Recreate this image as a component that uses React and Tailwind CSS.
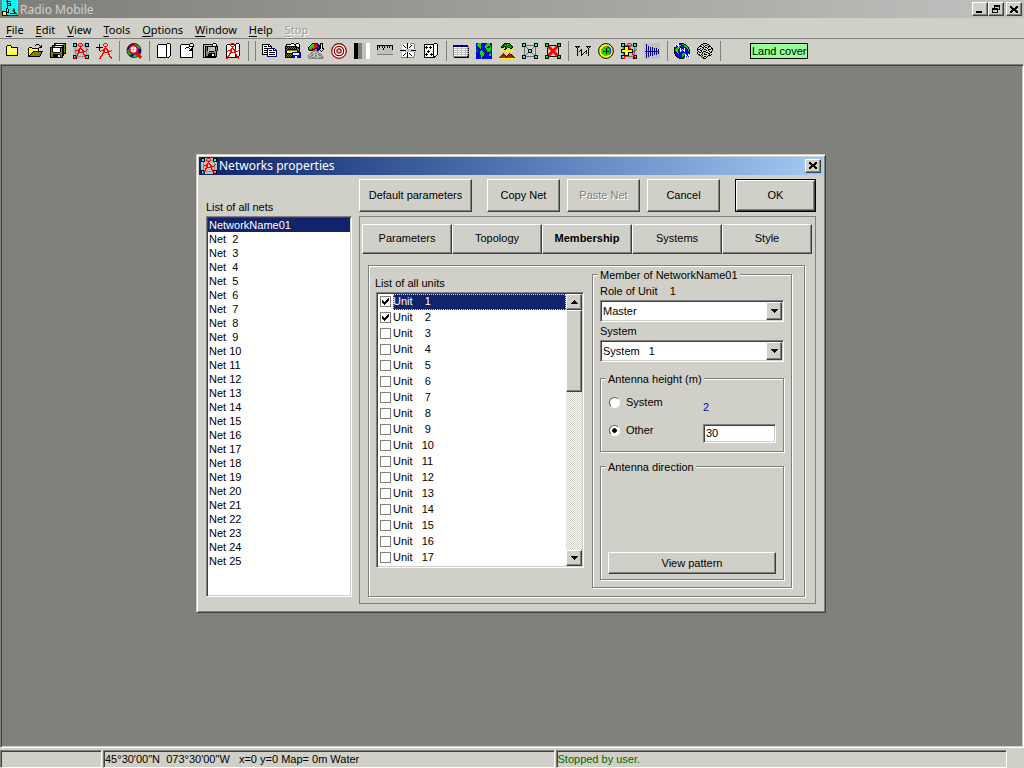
import React, { useState } from "react";

const RAISED =
  "border border-t-white border-l-white border-r-[#404040] border-b-[#404040] shadow-[inset_-1px_-1px_0_#808080] bg-[#d1d0c8]";
const SUNKEN =
  "border border-t-[#808080] border-l-[#808080] border-r-white border-b-white shadow-[inset_1px_1px_0_#404040,inset_-1px_-1px_0_#d1d0c8]";
const ETCHED = "border border-[#808080] shadow-[1px_1px_0_#fff,inset_1px_1px_0_#fff]";

const COLORS = {
  k: "#000000",
  w: "#ffffff",
  y: "#ffff00",
  Y: "#ffff9c",
  r: "#ff0000",
  R: "#800000",
  g: "#00e000",
  G: "#008000",
  b: "#0000ff",
  n: "#000080",
  c: "#00ffff",
  o: "#808000",
  s: "#808080",
  l: "#c0c0c0",
  d: "#404040",
  t: "#a04000",
};

function Pixels({ rows }) {
  const runs = [];
  rows.forEach((row, y) => {
    let x = 0;
    while (x < row.length) {
      const ch = row[x];
      let end = x + 1;
      while (end < row.length && row[end] === ch) end++;
      if (COLORS[ch]) runs.push(<rect key={`${x}-${y}`} x={x} y={y} width={end - x} height="1" fill={COLORS[ch]} />);
      x = end;
    }
  });
  return <>{runs}</>;
}

function Svg({ children }) {
  return (
    <svg width="16" height="16" viewBox="0 0 16 16" shapeRendering="crispEdges" aria-hidden="true" className="block shrink-0">
      {children}
    </svg>
  );
}

const ART = {
  newFolder: [
    "", "",
    "...kkkk.........",
    "..kYyYyk........",
    "..kyYyYkkkkkkk..",
    "..kYYyYyYyYyYk..",
    "..kYyYYYyYYYyk..",
    "..kyYyYyYyYyYk..",
    "..kYYyYYYyYYYk..",
    "..kYyYyYyYyYyk..",
    "..kyYYYyYYYyYk..",
    "..kYyYyYyYyYyk..",
    "..kkkkkkkkkkkk..",
  ],
  openFolder: [
    "",
    ".........kkk....",
    "........k...k.k.",
    ".............kk.",
    "..kkk.......kkk.",
    ".kYyYkkkkkkk....",
    ".kyYyYyYyYyk....",
    ".kYyYyYyYyYk....",
    ".kyYyYkkkkkkkkkk",
    ".kYyYkooooooook.",
    ".kyYkoooooooook.",
    ".kYkoooooooook..",
    ".kkooooooooook..",
    ".kkkkkkkkkkkk...",
  ],
  saveAll: [
    "....kkkkkkkkkkkk",
    "....kowwwwwwwook",
    "..kkkkkkkkkkkkok",
    "..kokwwwwwwwkkok",
    "kkkkkkkkkkkkkkok",
    "kokwwwwwwwkokkok",
    "kokwwwwwwwkokkok",
    "kokwwwwwwwkokkok",
    "kokwwwwwwwkokkok",
    "kookkkkkkkookkok",
    "koooooooooookkkk",
    "kookkkkkkkookk..",
    "kookkkkkwwkokk..",
    "kookkkkkwwkok...",
    "kkkkkkkkkkkkk...",
  ],
  mast: [
    "......rrr.......",
    ".....r...r......",
    ".....r...r......",
    "......rrr.......",
    ".......r........",
    "......rrr.......",
    ".....rr.rr....r.",
    "...rrrr..rr..r..",
    "..r..rr..rrrr...",
    ".....rrrrrr.....",
    "....rr....r.....",
    "....r.....rr....",
    "...rr......r....",
    "..rr.......rr...",
    "..r.........rr..",
    ".rr..........r..",
  ],
  pageOpen: [
    "...........kkk..",
    "..kkkkkkkkkwwwk.",
    ".kwwwwwwwwkwwwk.",
    ".kwwwwwwwwkwwwk.",
    ".kwwwwwwwwkwwwk.",
    ".kwwwwwwwwkwwwk.",
    ".kwwwwwwwwkwwwk.",
    ".kwwwwwwwwkwwwk.",
    ".kwwwwwwwwkwwwk.",
    ".kwwwwwwwwkwwwk.",
    ".kwwwwwwwwkwwwk.",
    ".kwwwwwwwwkwwwk.",
    ".kwwwwwwwwkwwwk.",
    ".kwwwwwwwwkwwk..",
    ".kkkkkkkkkkkk...",
  ],
  pageArrow: [
    "...........kkk..",
    "..kkkkkkkkkwwwk.",
    ".kwwwwwwwwkwwwk.",
    ".kwwwwwwwwkkkkk.",
    ".kwwwwwkkkwwwk..",
    ".kwwwwkwwwkwkk..",
    ".kwwwwwwwwwkkk..",
    ".kwwwwwwwwkkkk..",
    ".kwwwwwwwwwwwk..",
    ".kwwwwwwwwwwwk..",
    ".kwwwwwwwwwwwk..",
    ".kwwwwwwwwwwwk..",
    ".kwwwwwwwwwwwk..",
    ".kwwwwwwwwwwwk..",
    ".kkkkkkkkkkkkk..",
  ],
  pageSave: [
    "...........kkk..",
    ".kkkkkkkkkkwwwk.",
    ".kllllllllkwwwk.",
    ".klkkkkkkkkkkkkk",
    ".klksklllllllksk",
    ".klksklllllllksk",
    ".klksklllllllksk",
    ".klksklllllllksk",
    ".klksslkkkkkssk.",
    ".klkssssssssssk.",
    ".klkssskkkkkksk.",
    ".klksskkkkwwksk.",
    ".klksskkkkwwksk.",
    ".klkkkkkkkkkkkk.",
    ".kkkkkkkkkkkkk..",
  ],
  copy: [
    "",
    "kkkkkkkk........",
    "kwwwwwkwk.......",
    "kwkkkwkkkk......",
    "kwwwwwwwwk......",
    "kwkkknnnnnnnn...",
    "kwwwwnwwwwwnwn..",
    "kwkkknwkkkwnnnn.",
    "kwwwwnwwwwwwwwn.",
    "kwkkknwkkkkkkwn.",
    "kwwwwnwwwwwwwwn.",
    "kkkkknwkkkkkkwn.",
    ".....nwwwwwwwwn.",
    ".....nnnnnnnnnn.",
  ],
  paste: [
    "......kkk..kkk..",
    ".kkkkkwwwkkwwwk.",
    ".kwwwwwwwwkwwwk.",
    "kkkkkkkkkkkkwwk.",
    "kokokokokokkkkk.",
    "kkokokokokokokk.",
    "kokkkkkkkkkkook.",
    "kkooooooooookok.",
    "kkYYyYyYyYyYkkk.",
    "kkyYyYynnnnnnnnn",
    "kkkkkkknwwwwwwbn",
    "kokokoknwwwwwwbn",
    "kkokokonbbbbbbbn",
    "kokokoknbbwwbbbn",
    "kkkkkkknnnwwnnnn",
  ],
  terrain: [
    "....kkkkkk..kkk.",
    "...kggrrrbk.kyk.",
    "..kgggrrrbbkkyk.",
    ".kggggrrrbbbkyk.",
    "kgggggrrkbbbkyk.",
    "kgggrrrkkbbkkykk",
    "krrrkkksskkkyyyk",
    ".kkkksssskk.kyk.",
    ".....sslss...k..",
    "...ssllllss.....",
    "..sslllssllss...",
    ".sllssllllssls..",
    "sllssllssllsss..",
    "slsslllssllllss.",
    "ssllsssllllsslss",
    ".ssssssssssssss.",
  ],
  ruler: [
    "", "",
    "kkkkkkkkkkkkkkkk",
    "klkllklkllklkllk",
    "klkllklkllklkllk",
    "klllllkllllllllk",
    "klllllkllllllllk",
    "llllllllllllllll",
    "llllllllllllllll",
    "llllllllllllllll",
    "llllllllllllllll",
    "ssssssssssssssss",
  ],
  center: [
    ".......k...sss..",
    "..lwwwwkwwswwws.",
    ".lwkwwwkwwwkwws.",
    ".lwwkwwkwwkwwws.",
    ".lwwwkwkwkwwwws.",
    ".lwwwwwkwwwwwws.",
    ".......lll......",
    "kkkkkk.lll.kkkkk",
    ".......lll......",
    ".lwwwwwkwwwwwws.",
    ".lwwwkwkwkwwwws.",
    ".lwwkwwkwwkwwws.",
    ".lwkwwwkwwwkwws.",
    ".lwwwwwkwwwwws..",
    ".sssssskssssss..",
  ],
  random: [
    "...........kkk..",
    ".kkkkkkkkkkwwwk.",
    ".kwwwwwwwwkwwwk.",
    ".kwkwwwkwwkwwwk.",
    ".kkkkwkkkwkwwwk.",
    ".kwkwwwkwwkwwwk.",
    ".kwwwwwwwwkwwwk.",
    ".kwwwkwwwwkwwwk.",
    ".kwwkkkwwwkwwwk.",
    ".kwwwkwwwwkwwwk.",
    ".kwkwwwwkwkwwwk.",
    ".kkkkwwkkkkwwwk.",
    ".kwkwwwwkwkwwk..",
    ".kwwwwwwwwkkk...",
    ".kkkkkkkkkkk....",
  ],
  table: [
    "", "",
    "nnnnnnnnnnnnnnn.",
    "nnnnnnnnnnnnnnns",
    "swwwlwwwlwwwwwls",
    "slllllllllllllsk",
    "swwwlwwwlwwwlwls",
    "slllllllllllllsk",
    "swwwlwwwlwwwlwls",
    "slllllllllllllsk",
    "swwwlwwwlwwwlwls",
    "slllllllllllllsk",
    "swwwlwwwlwwwlwlk",
    "sssssssssssssskk",
    ".kkkkkkkkkkkkkkk",
  ],
  world: [
    "bbggggkbbbbgggbb",
    "bggggkbbbkggggbb",
    "kggggkbbkgggggbb",
    "bkgggbbbbgggkbgb",
    "bbkggkbbbggkbbgb",
    "bbbkgkbbbbgggggb",
    "bbbbkbbbbkgggggk",
    "gbbbbgbbbbkggggb",
    "kgbbgggkbbbgggbb",
    "bbbbggggkbbbkbbb",
    "bbbkgggggkbbbbgb",
    "bbbbggggkbbbbggb",
    "bbbbkgggbbbbbggb",
    "bbbbbggkbbbbbkbb",
    "bbbbbgkbbbbbbbbb",
    "bbbbbgbbbbbbbbbb",
  ],
  island: [
    ".....kkkkkk.....",
    "....kGGGgGGk....",
    "...kGGgGGGGGk...",
    "..kGGkkGGgGGGk..",
    "..kkk.kGGkkGGk..",
    "......kk...kk...",
    ".....kk.........",
    "y.yy.yyy.yyy.yy.",
    ".y..y...y...y..y",
    "................",
    "....R.....R.....",
    "...RtR...RtRR...",
    "..RtRtR.RtRtRR..",
    ".RtRttRRRttRtRR.",
    "RttttttRttttttRR",
    "yyyyyyyyyyyyyyyy",
  ],
  antennas: [
    "", "",
    "",
    "kkkkk......kkkkk",
    ".kgk........kgk.",
    "..k..........k..",
    "..k...k......k..",
    "..k..kk....k.k..",
    "..k.k.k...kk.k..",
    "..k...k..k.k.k..",
    "..k...k.k..k.k..",
    "..k...kk.....k..",
    "..k...k......k..",
  ],
  yagi: [
    "llllllllllllllll",
    "llnlllllllllllll",
    "llnlllllllllllll",
    "llnlnlllllllllll",
    "llnlnlnlnlllllll",
    "llnlnlnlnlnlnlll",
    "llnlnlnlnlnlnlnl",
    "llnlnlnlnlnlnlnl",
    "lnnnnnnnnnnnnnnl",
    "llnlnlnlnlnlnlnl",
    "llnlnlnlnlnlnlnl",
    "llnlnlnlnlnlnlll",
    "llnlnlnlnlllllll",
    "llnlnlllllllllll",
    "llnlllllllllllll",
    "llllllllllllllll",
  ],
  globe: [
    ".w..wkkkkk......",
    ".ww.wbbbggkk....",
    ".wkwwggbbbggk...",
    ".wbbwgkbbbgggk..",
    "kbbgggkbbbbkggk.",
    "kbgggkwbbbwbkgk.",
    "kgggkbwbwbwbbkgk",
    "kgggkbwwbwwbbbgk",
    "kbggbbwbbbwbbbbk",
    "kbbgkbbbbbbbbbbk",
    "kbbbgkbbbggbbbbk",
    ".kbbbbbbgggwbbw.",
    ".kbbbbbbggkwwkww",
    "..kbbbbbgkbwbwbw",
    "...kkbbbbbkw...w",
    ".....kkkkk.w...w",
  ],
  mesh: [
    "......kkkk......",
    "....kk....kk....",
    "...k..k.kk..k...",
    "..kkk..k...kkk..",
    ".k...kk.kk.k..k.",
    "k..k..k...k...kk",
    "kkk..k.kk..kkk.k",
    "k..kk....k.k...k",
    ".k..k.kkk...k.k.",
    "k.kk.k...kk..kk.",
    "k....k.k...kk...",
    ".kk.k..kkk..k.k.",
    "..kk.k.....kkk..",
    "....k..kk.k.....",
    ".....kk..k......",
    "......kkk.......",
  ],
  app: [
    "ccccckcccccccccc",
    "cccckkkkkccccccc",
    "ccccckcccccccccc",
    "ccccckkkkccccccc",
    "ccccckcckccccccc",
    "ccccckkkkccccccc",
    "ccccckcccccccccc",
    "ccccckcccccccccc",
    "cccckkcccccGcccc",
    "cccckckccccGGccc",
    "cccckckcccGGkccc",
    "kkkkkckccccGGccc",
    "kyyykkkccccckGcc",
    "kywykccckkkkkGGc",
    "kyyykcccccccccGc",
    "kkkkkkkkkkkkkkkk",
  ],
};

function Mast() {
  return <Pixels rows={ART.mast} />;
}

function Nodes({ fill = "#00ffff" }) {
  return (
    <g fill={fill} stroke="#000">
      <rect x="0.5" y="0.5" width="3" height="3" />
      <rect x="12.5" y="0.5" width="3" height="3" />
      <rect x="0.5" y="12.5" width="3" height="3" />
      <rect x="12.5" y="12.5" width="3" height="3" />
    </g>
  );
}

function Links() {
  return <path d="M2.5 2.5H13.5V13.5H2.5ZM2.5 2.5L13.5 13.5M13.5 2.5L2.5 13.5" fill="none" stroke="#707070" />;
}

function NetworkIcon() {
  return (
    <Svg>
      <rect width="16" height="16" fill="#c0c0c0" />
      <path d="M2.5 2.5H13.5V13.5H2.5Z" fill="none" stroke="#909090" />
      <Nodes />
      <Mast />
    </Svg>
  );
}

const art = (name) => (
  <Svg>
    <Pixels rows={ART[name]} />
  </Svg>
);

const ICONS = {
  network: <NetworkIcon />,
  addUnit: (
    <Svg>
      <g transform="translate(2 0)">
        <Mast />
      </g>
      <path d="M0 4.500H7M3.500 1V8" stroke="#000" />
    </Svg>
  ),
  search: (
    <Svg>
      <g shapeRendering="auto">
        <circle cx="8" cy="7.500" r="7" fill="#0000ff" stroke="#000" strokeWidth="0.8" />
        <path d="M8 1C11 0.500 14 3 14.500 6L11 5ZM1 7L4 6L5 12L3 12ZM6 14L9 11L12 13L9 14.500Z" fill="#00d000" />
        <circle cx="7.500" cy="6.500" r="4" fill="#fff" stroke="#ff0000" strokeWidth="2" />
        <path d="M5.500 6.500H9.500M7.500 4.500V8.500" stroke="#c0c0c0" />
        <path d="M10.500 9.500L15 15" stroke="#ff0000" strokeWidth="3" />
      </g>
    </Svg>
  ),
  pageUnit: (
    <Svg>
      <Pixels rows={ART.pageOpen} />
      <Mast />
    </Svg>
  ),
  target: (
    <Svg>
      <g fill="none" stroke="#900000" strokeWidth="1.2" shapeRendering="auto">
        <circle cx="8" cy="8" r="7.300" fill="#fff" />
        <circle cx="8" cy="8" r="4.700" />
        <circle cx="8" cy="8" r="2.200" />
        <path d="M8 7.500V8.500" />
      </g>
    </Svg>
  ),
  grey: (
    <Svg>
      <rect width="4" height="16" fill="#000" />
      <rect x="4" width="4" height="16" fill="#808080" />
      <rect x="8" width="4" height="16" fill="#c0c0c0" />
      <rect x="12" width="4" height="16" fill="#fff" />
    </Svg>
  ),
  links: (
    <Svg>
      <Links />
      <Nodes />
      <rect x="6.500" y="6.500" width="3" height="3" fill="#00ffff" stroke="#000" />
    </Svg>
  ),
  noLinks: (
    <Svg>
      <path d="M2.500 2.500H13.500V13.500H2.500Z" fill="none" stroke="#000" />
      <path d="M3 3L13 13M13 3L3 13" stroke="#ff0000" strokeWidth="3" shapeRendering="auto" />
      <Nodes fill="#00e000" />
    </Svg>
  ),
  coverage: (
    <Svg>
      <g shapeRendering="auto">
        <circle cx="8" cy="8" r="7.400" fill="#ffff00" stroke="#000" />
        <circle cx="8" cy="8" r="4.500" fill="#00e000" stroke="#909000" strokeWidth="0.8" />
        <path d="M9 3.500C13 4 13.500 9 11.500 11.500" fill="none" stroke="#3030ff" strokeWidth="1.500" />
      </g>
      <path d="M5 8.500H11M8.500 5V11" stroke="#000" />
    </Svg>
  ),
  bestSite: (
    <Svg>
      <rect width="16" height="16" fill="#c0c0c0" />
      <path d="M2.5 2.5H13.5V13.5H2.5Z" fill="none" stroke="#707070" />
      <Nodes />
      <g transform="translate(1 0)">
        <Mast />
      </g>
      <path d="M3.500 3.500H7.500V6.500H11.500V9.500H7.500V12.500H3.500V9.500H0.500V6.500H3.500Z" fill="#ffff00" stroke="#000" />
    </Svg>
  ),
};

const TOOLBAR = [
  [["New map", "newFolder"], ["Open", "openFolder"], ["Save all", "saveAll"], ["Networks properties", "network"], ["Units properties", "addUnit"]],
  [["Find", "search"]],
  [["New picture", "pageOpen"], ["Open picture", "pageArrow"], ["Save picture", "pageSave"], ["Units on picture", "pageUnit"]],
  [],
  [["Copy", "copy"], ["Paste", "paste"], ["Elevation", "terrain"], ["Range", "target"], ["Grey scale", "grey"], ["Distance", "ruler"], ["Center", "center"], ["Scatter", "random"]],
  [["Table", "table"], ["World map", "world"], ["Land", "island"], ["Show links", "links"], ["Hide links", "noLinks"]],
  [["Radio link", "antennas"], ["Coverage", "coverage"], ["Best site", "bestSite"], ["Antenna", "yagi"]],
  [["Internet", "globe"], ["Mesh", "mesh"]],
];

const MENU = ["File", "Edit", "View", "Tools", "Options", "Window", "Help", "Stop"];

function CloseGlyph() {
  return (
    <svg width="8" height="7" viewBox="0 0 8 7" shapeRendering="crispEdges" aria-hidden="true">
      <Pixels rows={["kk....kk", "kkk..kkk", ".kkkkkk.", "..kkkk..", ".kkkkkk.", "kkk..kkk", "kk....kk"]} />
    </svg>
  );
}

function WindowButton({ label, children }) {
  return (
    <button aria-label={label} className={`flex h-[14px] w-4 items-center justify-center ${RAISED}`}>
      {children}
    </button>
  );
}

function TitleBar() {
  return (
    <header className="flex h-[18px] shrink-0 items-center bg-linear-to-r from-[#7d7e7a] to-[#c1c2bf] px-[2px]">
      <div className="-mt-[3px]">{art("app")}</div>
      <h1 className="ml-[2px] flex-1 pt-[2px] font-['Noto_Sans',sans-serif] text-[12px] leading-4 text-[#d1d0c8]">Radio Mobile</h1>
      <WindowButton label="Minimize">
        <svg width="8" height="8" viewBox="0 0 8 8" aria-hidden="true">
          <rect y="6" width="6" height="2" />
        </svg>
      </WindowButton>
      <WindowButton label="Restore">
        <svg width="9" height="8" viewBox="0 0 9 8" shapeRendering="crispEdges" aria-hidden="true">
          <Pixels rows={["..kkkkkk.", "..kkkkkk.", "..k....k.", "kkkkkk.k.", "kkkkkkkk.", "k....k...", "k....k...", "kkkkkk..."]} />
        </svg>
      </WindowButton>
      <div className="ml-[2px]">
        <WindowButton label="Close">
          <CloseGlyph />
        </WindowButton>
      </div>
    </header>
  );
}

function MenuBar() {
  return (
    <nav className="flex h-5 shrink-0 items-center pt-1 font-['Noto_Sans',sans-serif] text-[11px] leading-4">
      {MENU.map((item) => (
        <button
          key={item}
          disabled={item === "Stop"}
          className="px-[6px] underline-offset-2 disabled:text-[#9a9a94] disabled:[text-shadow:1px_1px_0_#fff]"
        >
          <span className="underline">{item[0]}</span>
          {item.slice(1)}
        </button>
      ))}
    </nav>
  );
}

function Toolbar() {
  return (
    <div role="toolbar" aria-label="Tools" className="flex h-[26px] shrink-0 items-center border-t border-[#808080] pb-px">
      {TOOLBAR.map((group, i) => (
        <div key={i} className="flex items-center">
          {group.map(([label, icon]) => (
            <button key={label} aria-label={label} className="w-[23px] pl-1">
              {ICONS[icon] || art(icon)}
            </button>
          ))}
          <span className="mr-[2px] ml-1 h-5 w-px bg-[#808080]" />
        </div>
      ))}
      <button className="ml-[27px] h-4 border border-black bg-[#98ff98] px-px leading-[14px] whitespace-nowrap">Land cover</button>
    </div>
  );
}

function StatusBar() {
  const panel =
    "h-[18px] border border-t-[#808080] border-l-[#808080] border-r-white border-b-white px-px leading-4 whitespace-pre shadow-[inset_1px_1px_0_#404040]";
  return (
    <footer className="flex h-5 shrink-0 items-end gap-px pr-[17px]">
      <div className={`w-[102px] ${panel}`} />
      <div className={`flex-1 ${panel}`}>{"45°30'00\"N  073°30'00\"W   x=0 y=0 Map= 0m Water"}</div>
      <div className={`flex-1 text-[#006800] ${panel}`}>Stopped by user.</div>
    </footer>
  );
}

function PushButton({ children, className = "", disabled }) {
  return (
    <button
      disabled={disabled}
      className={`h-[33px] ${RAISED} disabled:text-[#808080] disabled:[text-shadow:1px_1px_0_#fff] ${className}`}
    >
      {children}
    </button>
  );
}

function NetList() {
  const [selected, setSelected] = useState(0);
  const nets = ["NetworkName01"];
  for (let n = 2; n <= 25; n++) nets.push(`Net ${n < 10 ? " " : ""}${n}`);
  return (
    <div className="mb-[7px] flex w-[146px] flex-col pt-[21px]">
      <h3 id="nets-label" className="mb-[2px] leading-[14px]">
        List of all nets
      </h3>
      <ul role="listbox" aria-labelledby="nets-label" className={`flex-1 bg-white p-px ${SUNKEN}`}>
        {nets.map((net, i) => (
          <li
            key={net}
            role="option"
            aria-selected={i === selected}
            onClick={() => setSelected(i)}
            className={`pl-px leading-[14px] whitespace-pre ${i === selected ? "bg-[#11236b] text-white" : ""}`}
          >
            {net}
          </li>
        ))}
      </ul>
    </div>
  );
}

function ScrollArrow({ label, rows }) {
  return (
    <button aria-label={label} className={`flex h-4 w-4 shrink-0 items-center justify-center ${RAISED}`}>
      <svg width="7" height="4" viewBox="0 0 7 4" shapeRendering="crispEdges" aria-hidden="true">
        <Pixels rows={rows} />
      </svg>
    </button>
  );
}

const UP = ["...k...", "..kkk..", ".kkkkk.", "kkkkkkk"];
const DOWN = ["kkkkkkk", ".kkkkk.", "..kkk..", "...k..."];

function UnitList() {
  const units = Array.from({ length: 17 }, (_, i) => i + 1);
  return (
    <div className="pt-2">
      <h3 className="mb-[2px] leading-[14px]">List of all units</h3>
      <div className={`ml-px flex w-[208px] bg-white p-px ${SUNKEN}`}>
        <ul className="flex-1">
          {units.map((n) => (
            <li key={n}>
              <label className="flex h-4 items-center pl-[2px]">
                <span className="relative mr-[2px] h-[11px] w-[11px]">
                  <input
                    type="checkbox"
                    defaultChecked={n < 3}
                    className="peer block h-[11px] w-[11px] appearance-none border border-[#808080] bg-white"
                  />
                  <svg
                    width="7"
                    height="7"
                    viewBox="0 0 7 7"
                    shapeRendering="crispEdges"
                    aria-hidden="true"
                    className="pointer-events-none absolute top-[2px] left-[2px] hidden peer-checked:block"
                  >
                    <Pixels rows={["......k", ".....kk", "k...kkk", "kk.kkk.", "kkkkk..", ".kkk...", "..k...."]} />
                  </svg>
                </span>
                <span
                  className={`h-4 flex-1 leading-[15px] whitespace-pre ${
                    n === 1 ? "bg-[#11236b] text-white outline-1 -outline-offset-1 outline-dotted outline-[#eedc94]" : ""
                  }`}
                >
                  {`Unit   ${n < 10 ? " " : ""}${n}`}
                </span>
              </label>
            </li>
          ))}
        </ul>
        <div className="flex w-4 flex-col bg-[repeating-conic-gradient(#ffffff_0_25%,#d1d0c8_0_50%)] bg-[length:2px_2px]">
          <ScrollArrow label="Scroll up" rows={UP} />
          <div className={`h-[82px] ${RAISED}`} />
          <div className="flex-1" />
          <ScrollArrow label="Scroll down" rows={DOWN} />
        </div>
      </div>
    </div>
  );
}

function Combo({ id, label, options }) {
  return (
    <>
      <label htmlFor={id} className="mt-[2px] block leading-[14px] whitespace-pre">
        {label}
      </label>
      <div className={`relative mt-[2px] h-[22px] bg-white ${SUNKEN}`}>
        <select id={id} className="block h-5 w-full appearance-none bg-transparent pt-px pl-[2px] whitespace-pre outline-none">
          {options.map((o) => (
            <option key={o}>{o}</option>
          ))}
        </select>
        <span className={`pointer-events-none absolute top-px right-px flex h-[18px] w-4 items-center justify-center ${RAISED}`}>
          <svg width="7" height="4" viewBox="0 0 7 4" shapeRendering="crispEdges" aria-hidden="true">
            <Pixels rows={DOWN} />
          </svg>
        </span>
      </div>
    </>
  );
}

function Radio({ label, defaultChecked }) {
  return (
    <label className="flex h-[14px] items-center">
      <input
        type="radio"
        name="antenna-height"
        defaultChecked={defaultChecked}
        className="mr-[6px] ml-px h-[11px] w-[11px] appearance-none rounded-full border border-t-[#606060] border-r-white border-b-white border-l-[#606060] bg-white checked:bg-[radial-gradient(circle,#000_2px,#fff_2.5px)]"
      />
      {label}
    </label>
  );
}

function Group({ title, className = "", children }) {
  return (
    <fieldset className={`min-w-0 px-[7px] ${ETCHED} ${className}`}>
      <legend className="-ml-[2px] bg-[#d1d0c8] px-[2px] leading-[14px]">{title}</legend>
      {children}
    </fieldset>
  );
}

function MemberPanel() {
  return (
    <Group title="Member of NetworkName01" className="mb-2 w-[200px] pb-[7px]">
      <Combo id="role" label="Role of Unit    1" options={["Master", "Slave", "Node"]} />
      <Combo id="system" label="System" options={["System\u00a0\u00a0 1", "System\u00a0\u00a0 2"]} />
      <Group title="Antenna height (m)" className="mt-[10px] pb-2">
        <div className="flex justify-between">
          <div className="flex flex-col gap-[14px] pt-[10px]">
            <Radio label="System" />
            <Radio label="Other" defaultChecked />
          </div>
          <div className="w-[73px] pt-[14px]">
            <output className="block leading-[14px] text-[#0000c0]">2</output>
            <input
              aria-label="Other antenna height"
              defaultValue="30"
              className={`mt-[10px] block h-[19px] w-full bg-white px-[2px] outline-none ${SUNKEN}`}
            />
          </div>
        </div>
      </Group>
      <Group title="Antenna direction" className="mt-2 pt-[78px] pb-[5px]">
        <button className={`block h-[22px] w-full pt-px ${RAISED}`}>View pattern</button>
      </Group>
    </Group>
  );
}

const TABS = ["Parameters", "Topology", "Membership", "Systems", "Style"];

function Dialog() {
  return (
    <section
      role="dialog"
      aria-label="Networks properties"
      className="w-[630px] border border-t-[#d1d0c8] border-r-[#404040] border-b-[#404040] border-l-[#d1d0c8] bg-[#d1d0c8] p-[2px] shadow-[inset_1px_1px_0_#fff,inset_-1px_-1px_0_#808080]"
    >
      <header className="flex h-[18px] items-center bg-linear-to-r from-[#0f2369] via-[#5276b2] to-[#a4caf4] px-[2px] text-white">
        <NetworkIcon />
        <h2 className="ml-[2px] flex-1 pt-px font-['Noto_Sans',sans-serif] text-[12px] leading-4">Networks properties</h2>
        <WindowButton label="Close dialog">
          <CloseGlyph />
        </WindowButton>
      </header>
      <div className="flex gap-[7px] px-[7px] pt-1 pb-[6px]">
        <NetList />
        <div className="flex min-w-0 flex-1 flex-col">
          <div className="mb-1 flex justify-between">
            <PushButton className="w-[113px]">Default parameters</PushButton>
            <div className="flex gap-[7px]">
              <PushButton className="w-[73px]">Copy Net</PushButton>
              <PushButton className="w-[73px]" disabled>
                Paste Net
              </PushButton>
              <PushButton className="w-[73px]">Cancel</PushButton>
            </div>
            <div className="border border-black">
              <button className={`block h-[31px] w-[79px] ${RAISED}`}>OK</button>
            </div>
          </div>
          <div className="border border-[#808080] pt-[7px] pr-[3px] pb-[6px] pl-[2px]">
            <div role="tablist" className="grid grid-cols-5">
              {TABS.map((tab) => (
                <button
                  key={tab}
                  role="tab"
                  aria-selected={tab === "Membership"}
                  className={`h-[30px] ${RAISED} ${tab === "Membership" ? "font-bold" : ""}`}
                >
                  {tab}
                </button>
              ))}
            </div>
            <div className={`mt-[11px] mr-[7px] ml-[6px] flex justify-between pt-[2px] pr-3 pl-[6px] ${ETCHED}`}>
              <UnitList />
              <MemberPanel />
            </div>
          </div>
        </div>
      </div>
    </section>
  );
}

export default function App() {
  return (
    <div className="flex h-screen flex-col overflow-hidden bg-[#d1d0c8] font-['Liberation_Sans',Arial,sans-serif] text-[11px] text-black">
      <TitleBar />
      <MenuBar />
      <Toolbar />
      <main className="flex-1 border border-t-[#808080] border-r-white border-b-white border-l-[#808080] bg-[#80817d] shadow-[inset_1px_1px_0_#404040,inset_-1px_-1px_0_#d1d0c8]" />
      <StatusBar />
      <div className="fixed inset-0 flex items-center justify-center pr-[2px] pb-[2px]">
        <Dialog />
      </div>
    </div>
  );
}
